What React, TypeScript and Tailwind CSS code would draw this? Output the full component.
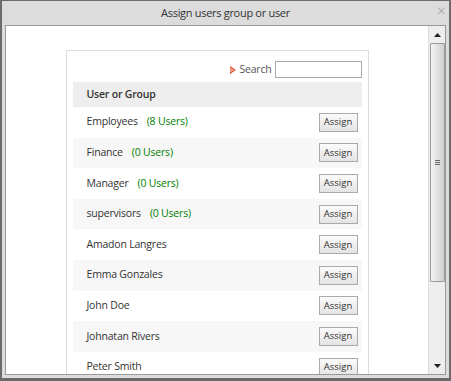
import React from "react";

const rows: { name: string; count?: string }[] = [
  { name: "Employees", count: "(8 Users)" },
  { name: "Finance", count: "(0 Users)" },
  { name: "Manager", count: "(0 Users)" },
  { name: "supervisors", count: "(0 Users)" },
  { name: "Amadon Langres" },
  { name: "Emma Gonzales" },
  { name: "John Doe" },
  { name: "Johnatan Rivers" },
  { name: "Peter Smith" },
];

export default function App() {
  return (
    <div
      className="w-[451px] h-[381px] flex flex-col bg-[#dcdcdc] border-l-2 border-r-2 border-b-[3px] border-t border-[#6b6b6b] overflow-hidden"
      style={{ fontFamily: '"Open Sans", sans-serif' }}
    >
      <div className="h-[24px] shrink-0 relative flex items-center justify-center text-[11px] tracking-[-0.3px] text-[#333]">
        Assign users group or user
        <span className="absolute right-[4px] top-[3px] text-[14px] leading-none text-[#aaa]">×</span>
      </div>
      <div className="flex-1 mx-[3px] mb-[3px] border border-[#999] bg-white flex min-h-0">
        <div className="flex-1 overflow-hidden">
          <div className="mx-auto mt-[24px] w-[303px] border border-[#ddd] px-[6px] pt-[10px] h-[400px]">
            <div className="flex items-center justify-end h-[17px] text-[10.5px] tracking-[-0.2px] text-[#555]">
              <svg width="6" height="8" viewBox="0 0 6 8" className="mr-[3px]">
                <path d="M0 0 L6 4 L0 8 Z" fill="#e0502a" />
                <path d="M1 2 L1 6 M3 3 L3 5" stroke="#fff" strokeWidth="0.8" />
              </svg>
              <span className="mr-[3px]">Search</span>
              <div className="w-[87px] h-[17px] border border-[#aaa] bg-white" />
            </div>
            <div className="mt-[4px]">
              <div className="h-[25px] bg-[#eeeeee] flex items-center pl-[14px] text-[10.5px] tracking-[-0.2px] font-semibold text-[#333]">
                User or Group
              </div>
              {rows.map((r, i) => (
                <div
                  key={r.name}
                  className={`h-[30.6px] flex items-center pl-[14px] pr-[4px] text-[10.5px] tracking-[-0.2px] text-[#333] ${i % 2 === 1 ? "bg-[#f7f7f7]" : "bg-white"}`}
                >
                  <span>{r.name}</span>
                  {r.count && <span className="ml-[9px] text-[#008000]">{r.count}</span>}
                  <div className="ml-auto w-[39px] h-[19px] border border-[#aaa] bg-gradient-to-b from-[#fbfbfb] to-[#e4e4e4] flex items-center justify-center text-[9.5px] tracking-normal text-[#333]">
                    Assign
                  </div>
                </div>
              ))}
            </div>
          </div>
        </div>
        <div className="w-[17px] shrink-0 bg-[#eeeeee] border-l border-[#ddd] flex flex-col items-center">
          <div className="h-[17px] w-full flex items-center justify-center">
            <svg width="7" height="4" viewBox="0 0 7 4"><path d="M3.5 0 L7 4 L0 4 Z" fill="#222" /></svg>
          </div>
          <div className="w-[15px] h-[239px] border border-[#999] rounded-[1px] bg-gradient-to-r from-[#f4f4f4] via-[#e2e2e2] to-[#cfcfcf] flex items-center justify-center">
            <div className="flex flex-col gap-[1px]">
              <div className="w-[5px] h-px bg-[#666]" />
              <div className="w-[5px] h-px bg-[#666]" />
              <div className="w-[5px] h-px bg-[#666]" />
            </div>
          </div>
          <div className="flex-1" />
          <div className="h-[17px] w-full flex items-center justify-center">
            <svg width="7" height="4" viewBox="0 0 7 4"><path d="M0 0 L7 0 L3.5 4 Z" fill="#222" /></svg>
          </div>
        </div>
      </div>
    </div>
  );
}
